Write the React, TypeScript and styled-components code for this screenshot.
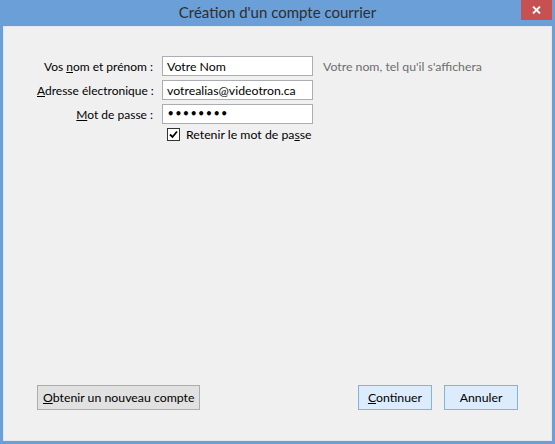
import { createGlobalStyle } from 'styled-components'
import styled from 'styled-components'

const GlobalStyle = createGlobalStyle`
  html, body {
    margin: 0;
    padding: 0;
    background: #6a9fd8;
  }
  body {
    font-family: 'Segoe UI', Lato, 'Open Sans', sans-serif;
  }
`

const Window = styled.div`
  width: 555px;
  height: 444px;
  box-sizing: border-box;
  background: #6a9fd8;
  display: flex;
  flex-direction: column;
  padding: 0 3px 3px;
`

const TitleBar = styled.div`
  height: 26px;
  flex: 0 0 26px;
  display: grid;
  grid-template-columns: 1fr auto 1fr;
  align-items: start;

  .title {
    grid-column: 2;
    font-size: 15px;
    line-height: 24px;
    color: #2e2e2e;
    white-space: nowrap;
  }
`

const CloseButton = styled.div`
  grid-column: 3;
  justify-self: end;
  width: 31px;
  height: 20px;
  background: #c75050;
  display: flex;
  align-items: center;
  justify-content: center;
  svg {
    display: block;
  }
`

const Panel = styled.div`
  flex: 1 1 auto;
  background: #f0f0f0;
  border: 1px solid #e4e8ee;
  display: flex;
  flex-direction: column;
  font-size: 12.3px;
  color: #000;
`

const Form = styled.div`
  display: grid;
  grid-template-columns: 116px 151px auto;
  column-gap: 9px;
  row-gap: 4px;
  padding: 29px 0 0 33px;
  align-items: center;
`

const Label = styled.label`
  text-align: right;
  white-space: nowrap;
  font-size: 12px;
  color: #000;
`

const Field = styled.input`
  box-sizing: border-box;
  height: 20px;
  width: 151px;
  border: 1px solid #abadb3;
  background: #fff;
  font-family: inherit;
  font-size: 12.3px;
  padding: 0 4px;
  margin: 0;
  outline: none;
  color: #000;

  &[type='password'] {
    font-family: 'DejaVu Sans', sans-serif;
    font-size: 11.5px;
    font-weight: bold;
    letter-spacing: 0.3px;
  }
`

const Hint = styled.span`
  color: #6d6d6d;
  padding-left: 1px;
  white-space: nowrap;
`

const CheckRow = styled.div`
  grid-column: 2 / span 2;
  display: flex;
  align-items: center;
  gap: 6px;
  padding-left: 5px;
  margin-top: -1px;
`

const CheckBox = styled.span`
  width: 13px;
  height: 13px;
  box-sizing: border-box;
  border: 1px solid #333;
  background: #fff;
  display: flex;
  align-items: center;
  justify-content: center;
`

const Footer = styled.div`
  margin-top: auto;
  display: flex;
  align-items: center;
  padding: 0 33px 30px 33px;
  gap: 12px;

  .spacer {
    flex: 1;
  }
`

const Button = styled.button<{ $primary?: boolean }>`
  height: 25px;
  box-sizing: border-box;
  font-family: inherit;
  font-size: 12.3px;
  color: #000;
  padding: 0 5px;
  min-width: 74px;
  border: 1px solid ${(p) => (p.$primary ? '#7eb4ea' : '#adadad')};
  background: ${(p) => (p.$primary ? '#dcecfc' : '#e1e1e1')};
  cursor: default;
`

const Key = styled.u`
  text-decoration: underline;
`

export default function App() {
  return (
    <>
      <GlobalStyle />
      <Window>
        <TitleBar>
          <div className="title">Création d'un compte courrier</div>
          <CloseButton>
            <svg width="9" height="8" viewBox="0 0 9 8">
              <path d="M1 0.5 L8 7.5 M8 0.5 L1 7.5" stroke="#fff" strokeWidth="1.8" />
            </svg>
          </CloseButton>
        </TitleBar>
        <Panel>
          <Form>
            <Label>
              Vos <Key>n</Key>om et prénom :
            </Label>
            <Field type="text" defaultValue="Votre Nom" />
            <Hint>Votre nom, tel qu'il s'affichera</Hint>

            <Label>
              <Key>A</Key>dresse électronique :
            </Label>
            <Field type="text" defaultValue="votrealias@videotron.ca" />
            <span />

            <Label>
              <Key>M</Key>ot de passe :
            </Label>
            <Field type="password" defaultValue="password" />
            <span />

            <span />
            <CheckRow>
              <CheckBox>
                <svg width="9" height="9" viewBox="0 0 9 9">
                  <path d="M1 4.5 L3.5 7 L8 1.5" fill="none" stroke="#000" strokeWidth="1.8" />
                </svg>
              </CheckBox>
              <span>
                Retenir le mot de pa<Key>s</Key>se
              </span>
            </CheckRow>
          </Form>

          <Footer>
            <Button>
              <Key>O</Key>btenir un nouveau compte
            </Button>
            <div className="spacer" />
            <Button $primary>
              <Key>C</Key>ontinuer
            </Button>
            <Button $primary>Annuler</Button>
          </Footer>
        </Panel>
      </Window>
    </>
  )
}
